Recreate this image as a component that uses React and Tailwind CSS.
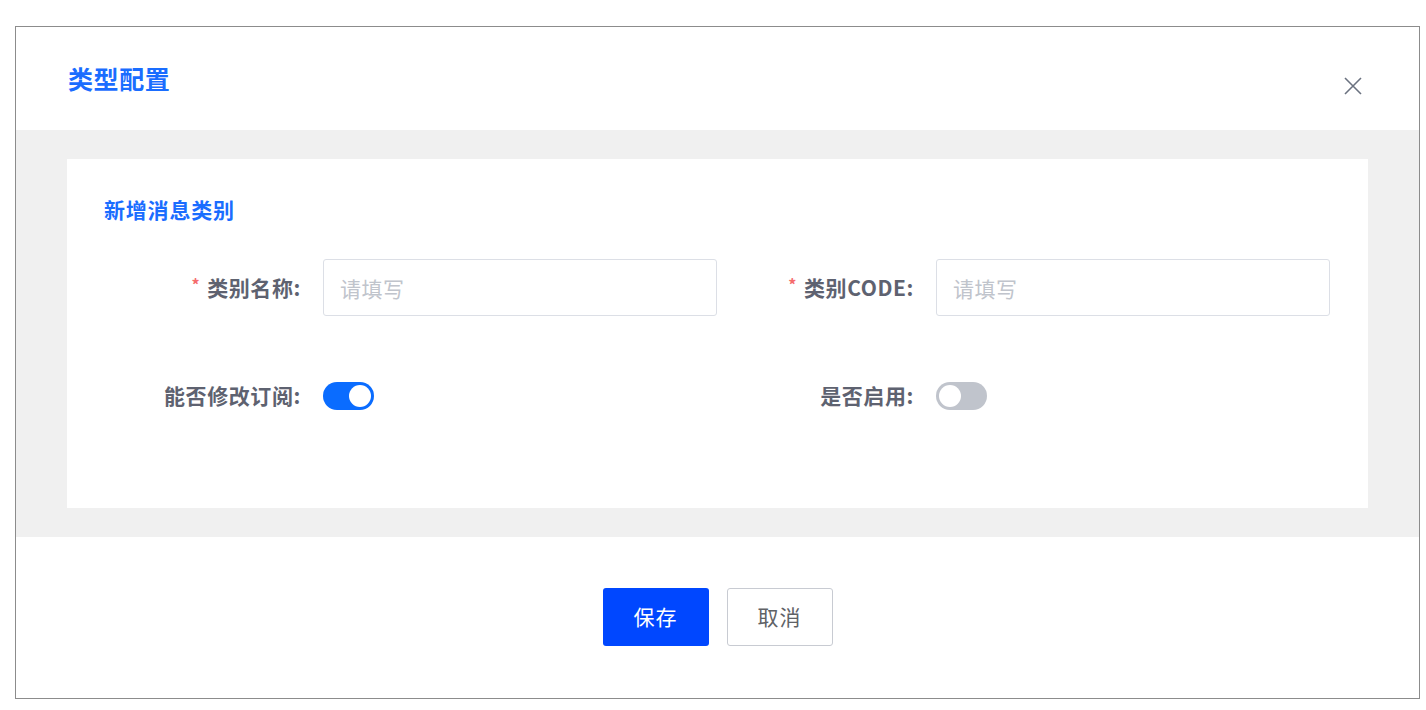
import { useState } from "react";

const font = { fontFamily: '"Noto Sans CJK SC", "Noto Sans", sans-serif' };

const Toggle = ({ on, onChange }) => (
  <button
    onClick={() => onChange(!on)}
    className={`relative w-[51px] h-[28px] rounded-full transition-colors ${
      on ? "bg-[#0a6cff]" : "bg-[#c0c4cc]"
    }`}
  >
    <span
      className={`absolute top-[3px] w-[22px] h-[22px] rounded-full bg-white transition-all ${
        on ? "left-[26px]" : "left-[3px]"
      }`}
    />
  </button>
);

const Label = ({ required, width, children }) => (
  <label
    className={`${width} shrink-0 text-right text-[21px] font-bold text-[#5e6270] whitespace-nowrap tracking-[0.6px]`}
  >
    {required && <span className="text-[#f56c6c] mr-[7px] text-[16px] align-top">*</span>}
    {children}
  </label>
);

const TextInput = () => (
  <input
    placeholder="请填写"
    className="w-[394px] h-[57px] border border-[#dcdfe6] rounded-[3px] px-[16px] text-[21px] tracking-[0.5px] text-[#303133] placeholder:text-[#c0c4cc] outline-none focus:border-[#0a6cff]"
    style={font}
  />
);

export default function App() {
  const [canEdit, setCanEdit] = useState(true);
  const [enabled, setEnabled] = useState(false);

  return (
    <div className="min-h-screen bg-white pt-[26px] pl-[15px]" style={font}>
      <div className="w-[1405px] h-[673px] border border-[#8c8c8c] bg-white flex flex-col">
        {/* Header */}
        <div className="h-[103px] shrink-0 flex items-start justify-between pl-[52px] pr-[56px]">
          <h2 className="mt-[33px] text-[25px] font-bold text-[#1a6dff] leading-[36px] tracking-[0.6px]">类型配置</h2>
          <button className="mt-[49px] text-[#6b7280]">
            <svg width="20" height="20" viewBox="0 0 20 20" fill="none" stroke="currentColor" strokeWidth="1.6">
              <path d="M2 2L18 18M18 2L2 18" />
            </svg>
          </button>
        </div>

        {/* Body */}
        <div className="h-[407px] shrink-0 bg-[#f0f0f0] px-[51px] py-[29px]">
          <div className="h-full bg-white pl-[37px] pt-[35px]">
            <h3 className="text-[21px] font-bold text-[#1a6dff] leading-[30px] tracking-[0.8px]">新增消息类别</h3>

            <div className="mt-[35px] flex items-center">
              <Label required width="w-[197px]">类别名称:</Label>
              <div className="ml-[22px]">
                <TextInput />
              </div>
              <Label required width="w-[197px]">类别CODE:</Label>
              <div className="ml-[22px]">
                <TextInput />
              </div>
            </div>

            <div className="mt-[64px] flex items-center">
              <Label width="w-[197px]">能否修改订阅:</Label>
              <div className="ml-[22px] w-[394px] flex">
                <Toggle on={canEdit} onChange={setCanEdit} />
              </div>
              <Label width="w-[197px]">是否启用:</Label>
              <div className="ml-[22px] flex">
                <Toggle on={enabled} onChange={setEnabled} />
              </div>
            </div>
          </div>
        </div>

        {/* Footer */}
        <div className="flex-1 flex justify-center items-start pt-[51px] gap-[18px]">
          <button className="w-[106px] h-[58px] rounded-[3px] bg-[#0047ff] text-white text-[21px] tracking-[1px]">保存</button>
          <button className="w-[106px] h-[58px] rounded-[3px] border border-[#c8cbd2] bg-white text-[#606266] text-[21px] tracking-[1px]">
            取消
          </button>
        </div>
      </div>
    </div>
  );
}
